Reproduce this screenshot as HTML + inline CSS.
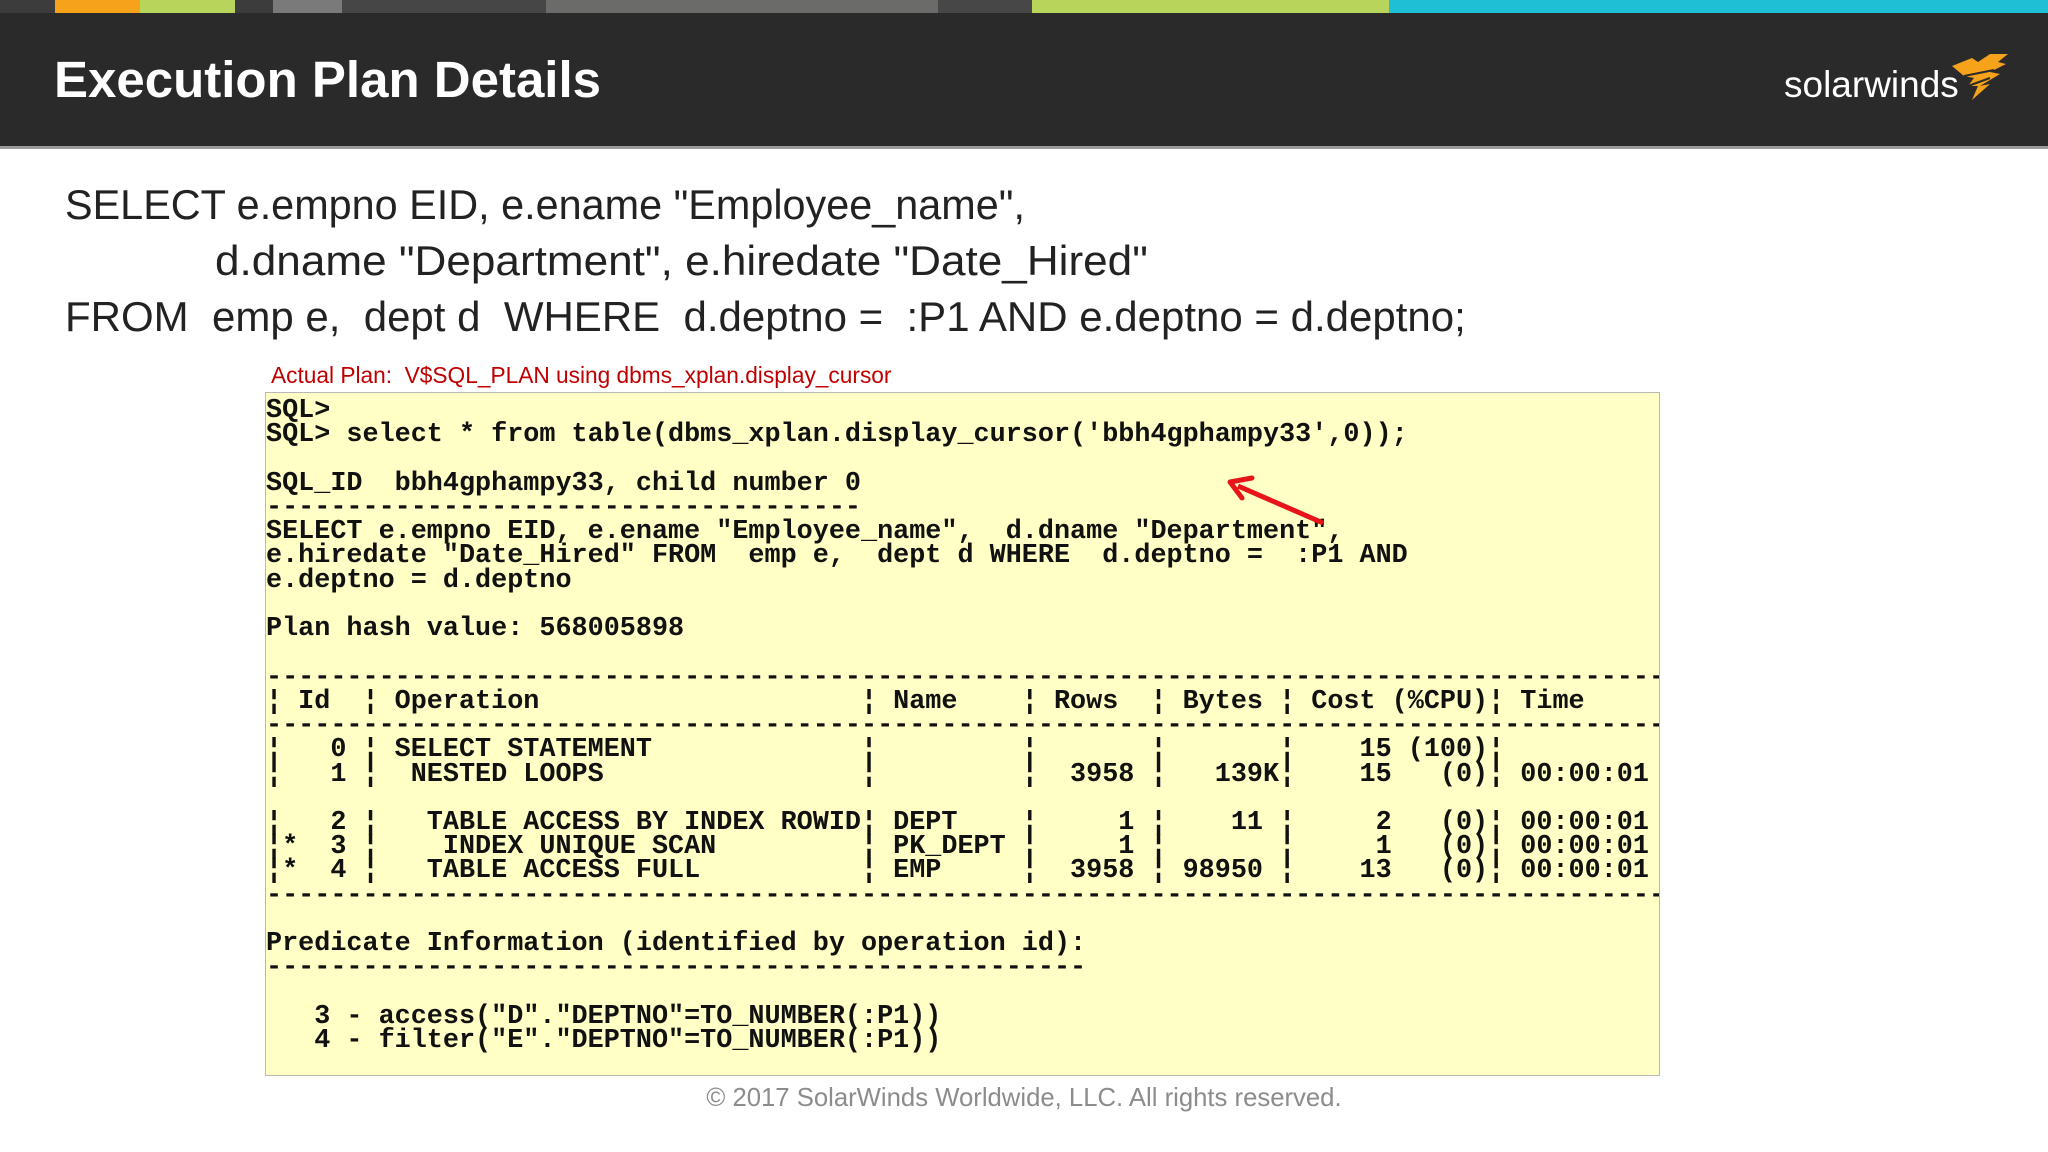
<!DOCTYPE html>
<html><head><meta charset="utf-8"><style>
html,body{margin:0;padding:0;}
body{width:2048px;height:1152px;position:relative;background:#fff;overflow:hidden;font-family:"Liberation Sans",sans-serif;}
.seg{position:absolute;top:0;height:13px;}
#hdr{position:absolute;top:13px;left:0;width:2048px;height:133px;background:#2a2a2a;border-bottom:3px solid #9a9a9a;}
#title{position:absolute;left:54px;top:50px;font-weight:bold;font-size:51px;color:#fff;white-space:nowrap;}
#logo{position:absolute;left:1784px;top:64px;font-size:37px;color:#fff;white-space:nowrap;}
.sql{position:absolute;font-size:42px;color:#222;white-space:nowrap;transform-origin:0 0;}
#cap{position:absolute;left:271px;top:362px;font-size:22.7px;color:#c00000;white-space:nowrap;}
#box{position:absolute;left:265px;top:392px;width:1393px;height:682px;background:#ffffc6;border:1px solid #b8b8b8;overflow:hidden;}
#box pre{margin:0;position:absolute;left:0;top:6px;font-family:"Liberation Mono",monospace;font-weight:bold;font-size:26.8px;line-height:24.23px;color:#111;white-space:pre;}
#foot{position:absolute;left:0;width:2048px;top:1084px;text-align:center;font-size:25.7px;color:#8c8c8c;}
</style></head><body>
<div class="seg" style="left:0;width:55px;background:#3c3c3c"></div>
<div class="seg" style="left:55px;width:85px;background:#f7a21b"></div>
<div class="seg" style="left:140px;width:95px;background:#b6d55a"></div>
<div class="seg" style="left:235px;width:38px;background:#3c3c3c"></div>
<div class="seg" style="left:273px;width:69px;background:#7a7a7a"></div>
<div class="seg" style="left:342px;width:204px;background:#464646"></div>
<div class="seg" style="left:546px;width:392px;background:#6b6b69"></div>
<div class="seg" style="left:938px;width:94px;background:#474747"></div>
<div class="seg" style="left:1032px;width:357px;background:#b6d55a"></div>
<div class="seg" style="left:1389px;width:659px;background:#1fc0d5"></div>
<div id="hdr"></div>
<div id="title">Execution Plan Details</div>
<div id="logo">solarwinds</div>
<svg style="position:absolute;left:1950px;top:52px" width="62" height="52" viewBox="0 0 62 52">
<path d="M2 14 L22 6 L28 10 L40 2 L58 2 L48 10 L56 12 L40 20 L50 22 L30 34 L40 32 L22 48 L28 34 L18 34 L24 26 L14 24 Z" fill="#f7a21b"/>
<path d="M14 24 L44 18 M18 34 L40 26" stroke="#2a2a2a" stroke-width="2"/>
</svg>
<div class="sql" style="left:65px;top:181px;transform:scaleX(0.985)">SELECT e.empno EID, e.ename "Employee_name",</div>
<div class="sql" style="left:215px;top:237px;transform:scaleX(1.05)">d.dname "Department", e.hiredate "Date_Hired"</div>
<div class="sql" style="left:65px;top:293px;transform:scaleX(1.0)">FROM&nbsp; emp e,&nbsp; dept d&nbsp; WHERE&nbsp; d.deptno =&nbsp; :P1 AND e.deptno = d.deptno;</div>
<div id="cap">Actual Plan:&nbsp; V$SQL_PLAN using dbms_xplan.display_cursor</div>
<div id="box"><pre>SQL&gt;
SQL&gt; select * from table(dbms_xplan.display_cursor('bbh4gphampy33',0));

SQL_ID  bbh4gphampy33, child number 0
-------------------------------------
SELECT e.empno EID, e.ename "Employee_name",  d.dname "Department",
e.hiredate "Date_Hired" FROM  emp e,  dept d WHERE  d.deptno =  :P1 AND
e.deptno = d.deptno

Plan hash value: 568005898

---------------------------------------------------------------------------------------
¦ Id  ¦ Operation                    ¦ Name    ¦ Rows  ¦ Bytes ¦ Cost (%CPU)¦ Time     ¦
---------------------------------------------------------------------------------------
¦   0 ¦ SELECT STATEMENT             ¦         ¦       ¦       ¦    15 (100)¦          ¦
¦   1 ¦  NESTED LOOPS                ¦         ¦  3958 ¦   139K¦    15   (0)¦ 00:00:01 ¦

¦   2 ¦   TABLE ACCESS BY INDEX ROWID¦ DEPT    ¦     1 ¦    11 ¦     2   (0)¦ 00:00:01 ¦
¦*  3 ¦    INDEX UNIQUE SCAN         ¦ PK_DEPT ¦     1 ¦       ¦     1   (0)¦ 00:00:01 ¦
¦*  4 ¦   TABLE ACCESS FULL          ¦ EMP     ¦  3958 ¦ 98950 ¦    13   (0)¦ 00:00:01 ¦
---------------------------------------------------------------------------------------

Predicate Information (identified by operation id):
---------------------------------------------------

   3 - access("D"."DEPTNO"=TO_NUMBER(:P1))
   4 - filter("E"."DEPTNO"=TO_NUMBER(:P1))</pre></div>
<svg style="position:absolute;left:0;top:0" width="2048" height="1152">
<line x1="1323" y1="523" x2="1238" y2="486" stroke="#e8141a" stroke-width="5"/>
<path d="M1230 482 L1252 478 M1230 482 L1242 498" stroke="#e8141a" stroke-width="5" fill="none" stroke-linecap="round"/>
</svg>
<div id="foot">© 2017 SolarWinds Worldwide, LLC. All rights reserved.</div>
</body></html>
